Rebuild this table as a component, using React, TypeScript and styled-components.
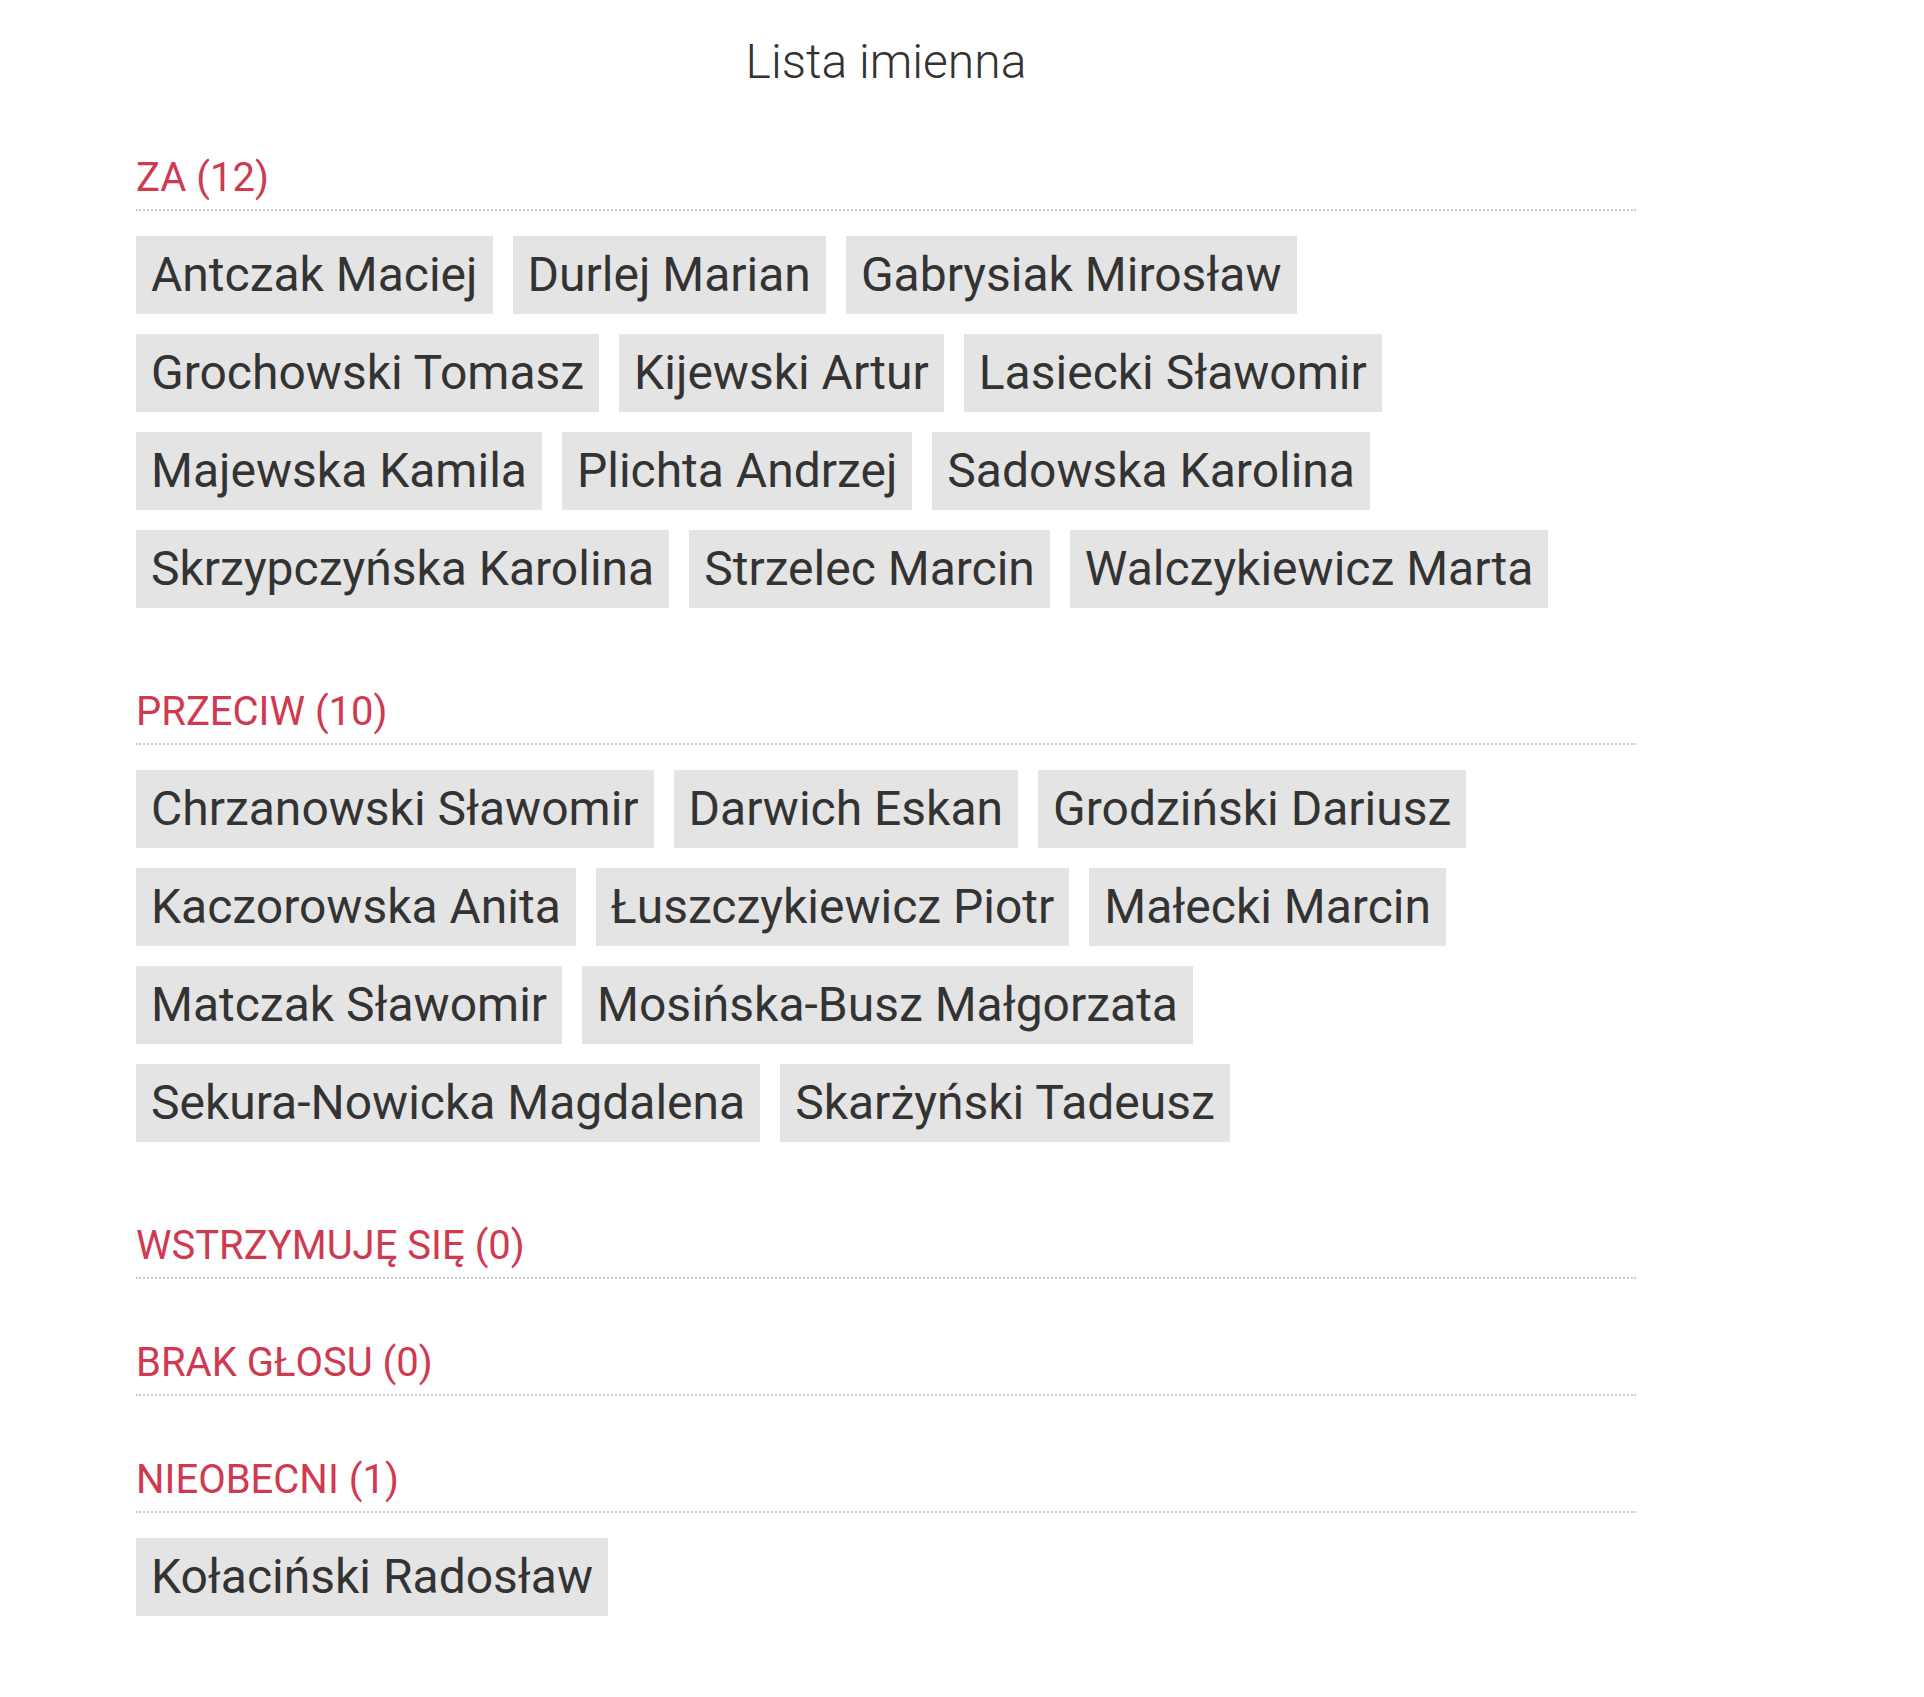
import React from 'react'
import styled, { createGlobalStyle } from 'styled-components'

const GlobalStyle = createGlobalStyle`
  html, body {
    margin: 0;
    padding: 0;
    background: #fff;
  }
  body {
    font-family: Roboto, "Liberation Sans", Arial, sans-serif;
    color: #333;
  }
`

const Page = styled.div`
  padding: 34px 0 74px 136px;
`

const Container = styled.div`
  display: flex;
  flex-direction: column;
  width: 1500px;
`

const Title = styled.h1`
  margin: 0 0 4px;
  font-size: 48px;
  line-height: 56px;
  font-weight: 300;
  text-align: center;
  color: #333;
`

const Section = styled.section`
  margin-top: 60px;
`

const Heading = styled.h2`
  margin: 0;
  padding-bottom: 8px;
  font-size: 40px;
  line-height: 47px;
  font-weight: 400;
  text-transform: uppercase;
  color: #cf3a50;
  border-bottom: 2px dotted #ccc;
`

const Names = styled.ul`
  display: flex;
  flex-wrap: wrap;
  list-style: none;
  margin: 0;
  padding: 25px 0 0;
`

const Name = styled.li`
  margin: 0 20px 20px 0;
  padding: 12px 15px;
  font-size: 48px;
  line-height: 54px;
  color: #333;
  background: #e4e4e4;
  white-space: nowrap;
`

type Group = {
  label: string;
  names: string[];
}

const groups: Group[] = [
  {
    label: 'Za',
    names: [
      'Antczak Maciej', 'Durlej Marian', 'Gabrysiak Mirosław', 'Grochowski Tomasz',
      'Kijewski Artur', 'Lasiecki Sławomir', 'Majewska Kamila', 'Plichta Andrzej',
      'Sadowska Karolina', 'Skrzypczyńska Karolina', 'Strzelec Marcin', 'Walczykiewicz Marta',
    ],
  },
  {
    label: 'Przeciw',
    names: [
      'Chrzanowski Sławomir', 'Darwich Eskan', 'Grodziński Dariusz', 'Kaczorowska Anita',
      'Łuszczykiewicz Piotr', 'Małecki Marcin', 'Matczak Sławomir', 'Mosińska-Busz Małgorzata',
      'Sekura-Nowicka Magdalena', 'Skarżyński Tadeusz',
    ],
  },
  { label: 'Wstrzymuję się', names: [] },
  { label: 'Brak głosu', names: [] },
  { label: 'Nieobecni', names: ['Kołaciński Radosław'] },
]

export default function App() {
  return (
    <Page>
      <GlobalStyle />
      <Container>
        <Title>Lista imienna</Title>
        {groups.map(({ label, names }) => (
          <Section key={label}>
            <Heading>{label} ({names.length})</Heading>
            {names.length > 0 && (
              <Names>
                {names.map(name => <Name key={name}>{name}</Name>)}
              </Names>
            )}
          </Section>
        ))}
      </Container>
    </Page>
  )
}
